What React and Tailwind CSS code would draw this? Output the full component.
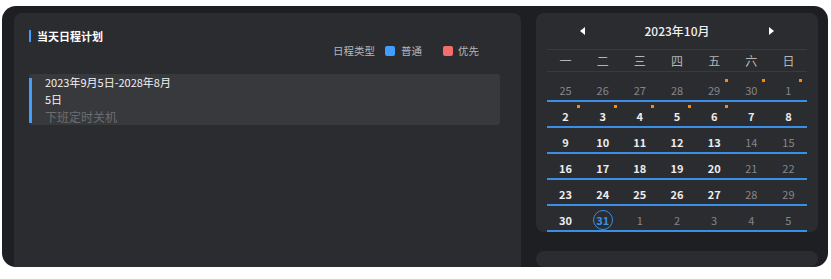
import React from 'react';

const weekdays = ['一', '二', '三', '四', '五', '六', '日'];

// 0 = other month, 1 = workday, 2 = weekend
const rows = [
  [[25, 0, 0], [26, 0, 0], [27, 0, 0], [28, 0, 0], [29, 0, 1], [30, 0, 1], [1, 2, 1]],
  [[2, 1, 1], [3, 1, 1], [4, 1, 1], [5, 1, 1], [6, 1, 1], [7, 1, 0], [8, 1, 0]],
  [[9, 1, 0], [10, 1, 0], [11, 1, 0], [12, 1, 0], [13, 1, 0], [14, 2, 0], [15, 2, 0]],
  [[16, 1, 0], [17, 1, 0], [18, 1, 0], [19, 1, 0], [20, 1, 0], [21, 2, 0], [22, 2, 0]],
  [[23, 1, 0], [24, 1, 0], [25, 1, 0], [26, 1, 0], [27, 1, 0], [28, 2, 0], [29, 2, 0]],
  [[30, 1, 0], [31, 1, 0], [1, 0, 0], [2, 0, 0], [3, 0, 0], [4, 0, 0], [5, 0, 0]],
];

const font = { fontFamily: '"Noto Sans CJK SC", "Noto Sans", sans-serif' };

const DayCell = ({ day, kind, dot, today }) => (
  <div className="relative h-[24px] flex justify-center pt-[5px]">
    <span
      className={
        today
          ? 'text-[11px] leading-[18px] font-semibold text-[#3a8ee6]'
          : kind === 1
          ? 'text-[11px] leading-[18px] font-semibold text-[#ececec]'
          : 'text-[11px] leading-[18px] text-[#85868a]'
      }
    >
      {day}
    </span>
    {today && (
      <span className="absolute left-1/2 top-[4px] -ml-[10px] w-[20px] h-[20px] rounded-full border-[1.5px] border-[#3a8ee6]" />
    )}
    {dot && <span className="absolute left-1/2 ml-[11px] top-[3px] w-[3px] h-[3px] bg-[#ff8a00]" />}
  </div>
);

const Calendar = () => (
  <div className="h-[230px] rounded-[8px] bg-[#2b2c30] px-[11px]">
    <div className="h-[36px] flex items-center justify-between px-[33px]">
      <span className="w-0 h-0 border-y-[4px] border-y-transparent border-r-[5px] border-r-white" />
      <span className="text-[12px] text-[#f0f0f0] font-medium">2023年10月</span>
      <span className="w-0 h-0 border-y-[4px] border-y-transparent border-l-[5px] border-l-white" />
    </div>
    <div className="grid grid-cols-7 h-[23px] border-y border-[#393a3e] items-center">
      {weekdays.map((w) => (
        <div key={w} className="text-center text-[12px] text-[#b4b5b8]">
          {w}
        </div>
      ))}
    </div>
    <div className="pt-[4px]">
      {rows.map((row, i) => (
        <div key={i} className="grid grid-cols-7 border-b-2 border-[#3a8ee6]">
          {row.map(([d, k, dot], j) => (
            <DayCell key={j} day={d} kind={k} dot={dot === 1} today={i === 5 && d === 31} />
          ))}
        </div>
      ))}
    </div>
  </div>
);

export default function App() {
  return (
    <div className="w-[831px] h-[279px] bg-white pt-[6px] pl-[2px]" style={font}>
      <div className="relative w-[826px] h-[261px] rounded-[14px] bg-[#1e1f22] overflow-hidden flex gap-[15px] pt-[7px] pl-[12px]">
        <div className="w-[507px] h-[300px] shrink-0 rounded-[8px] bg-[#2b2c30] pt-[16px] pl-[15px]">
          <div className="flex items-center h-[14px]">
            <span className="w-[2px] h-[12px] bg-[#409eff] mr-[6px]" />
            <span className="text-[11px] font-bold text-white">当天日程计划</span>
          </div>
          <div className="mt-[1px] h-[14px] w-[450px] flex items-center justify-end text-[10.5px] text-[#b5b6b9]">
            <span>日程类型</span>
            <span className="ml-[10px] w-[10px] h-[10px] rounded-[2px] bg-[#409eff]" />
            <span className="ml-[6px]">普通</span>
            <span className="ml-[21px] w-[10px] h-[10px] rounded-[2px] bg-[#f56c6c]" />
            <span className="ml-[5px]">优先</span>
          </div>
          <div className="relative mt-[16px] w-[471px] h-[51px] rounded-[3px] bg-[#38393d] overflow-hidden pl-[16px]">
            <span className="absolute left-0 top-[4px] bottom-[2px] w-[3px] bg-[#409eff]" />
            <div className="w-[132px] text-[11px] leading-[17px] text-[#f2f2f2]">2023年9月5日-2028年8月5日</div>
            <div className="text-[12px] leading-[17px] text-[#6c6d71]">下班定时关机</div>
          </div>
        </div>
        <div className="w-[282px] shrink-0 flex flex-col gap-[19px]">
          <Calendar />
          <div className="h-[60px] rounded-[8px] bg-[#2b2c30]" />
        </div>
      </div>
    </div>
  );
}
